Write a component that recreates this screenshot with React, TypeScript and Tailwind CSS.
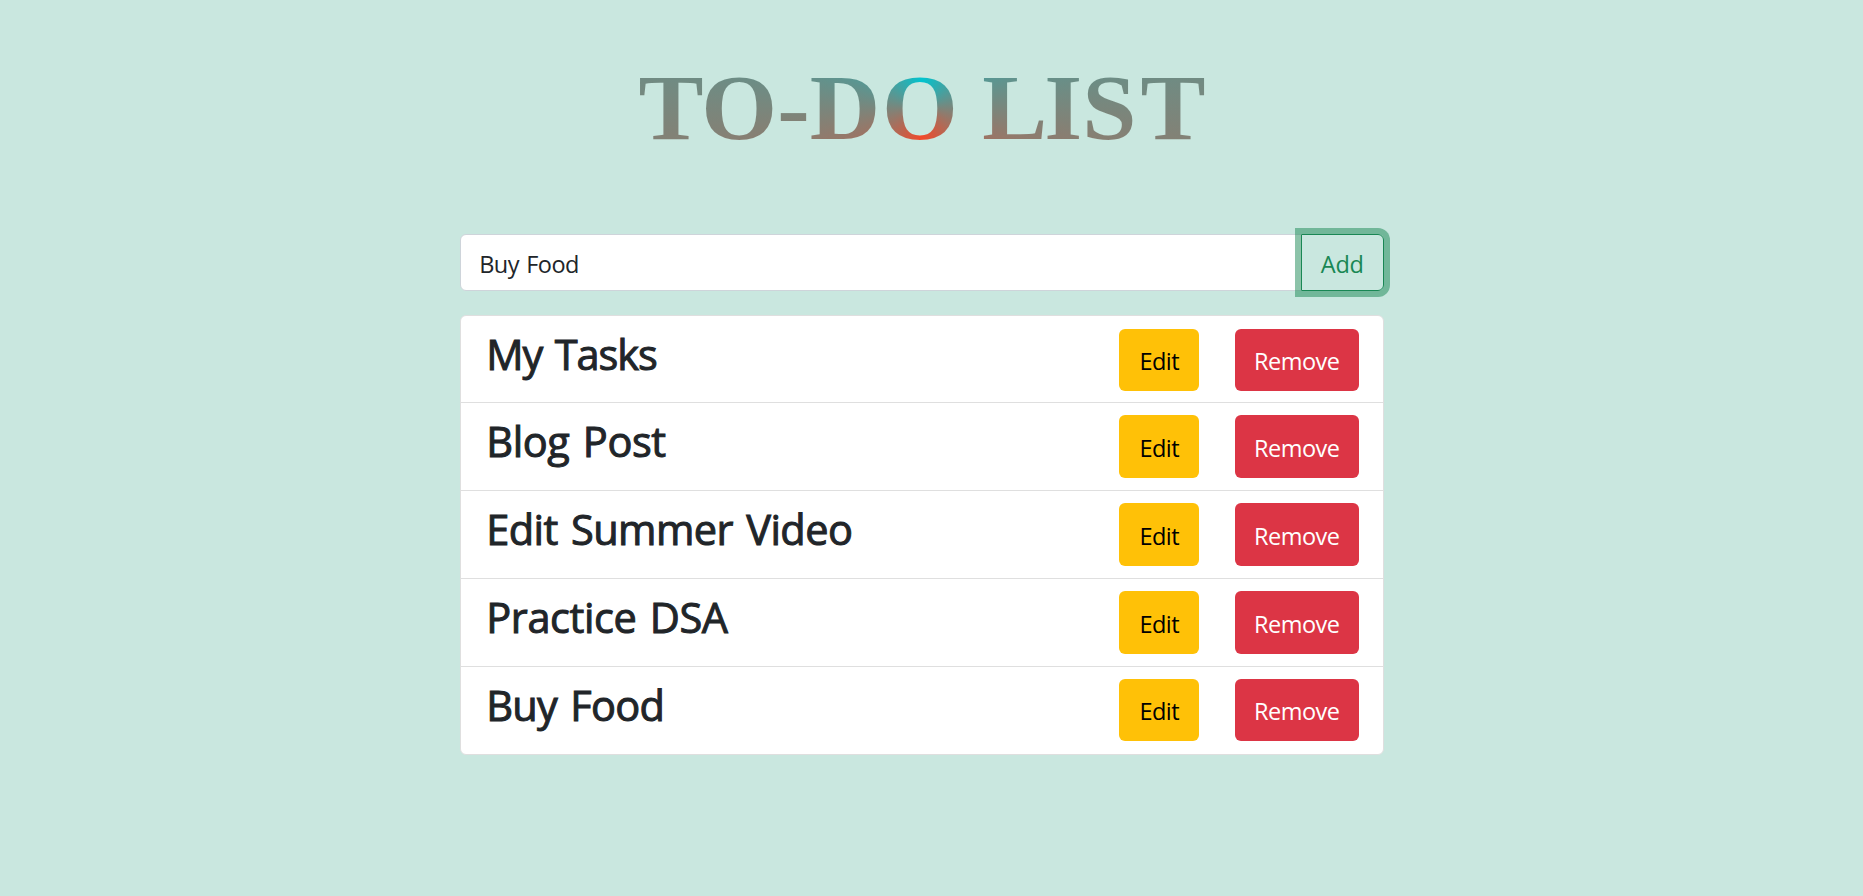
import React, { useState } from "react";

type Task = { title: string; row: string; button: string; tracking: string };

const tasks: Task[] = [
  { title: "My Tasks", row: "h-[87px] pt-[13px]", button: "h-[62px]", tracking: "-mt-px tracking-[-1.1px]" },
  { title: "Blog Post", row: "h-[88px] pt-3", button: "h-[63px]", tracking: "tracking-[-0.4px]" },
  { title: "Edit Summer Video", row: "h-[88px] pt-3", button: "h-[63px]", tracking: "tracking-[-0.55px]" },
  { title: "Practice DSA", row: "h-[88px] pt-3", button: "h-[63px]", tracking: "tracking-[-0.4px]" },
  { title: "Buy Food", row: "h-[87px] pt-3", button: "h-[62px]", tracking: "tracking-[-0.7px]" },
];

function TaskRow({ task }: { task: Task }) {
  return (
    <li className={`flex items-start border-b border-[#dfdfdf] pl-[25px] pr-[23.5px] last:border-b-0 ${task.row}`}>
      <h2
        className={`flex-1 pt-px text-[41.5px] font-normal leading-[50px] [-webkit-text-stroke:1px_#212529] [word-spacing:3px] ${task.tracking}`}
      >
        {task.title}
      </h2>
      <button className={`mr-9 w-20 rounded-[6px] bg-[#ffc107] pt-1 text-black ${task.button}`}>Edit</button>
      <button className={`w-[124px] rounded-[6px] bg-[#dc3545] pt-1 pr-px text-white ${task.button}`}>Remove</button>
    </li>
  );
}

export default function App() {
  const [text, setText] = useState("Buy Food");
  return (
    <main className="flex h-[896px] flex-col items-center overflow-hidden bg-[#c9e7df] pr-[19px] font-['Open_Sans','Noto_Sans',sans-serif] text-[23.5px] tracking-[-0.5px] text-[#212529]">
      <h1 className="mt-[49px] h-[117px] w-[922px] scale-x-[1.037] whitespace-nowrap bg-[conic-gradient(#00c4cf,#f2492a,#00c4cf)] bg-clip-text text-center font-['Liberation_Serif',serif] text-[94px] font-bold leading-[117px] tracking-normal text-transparent">
        <span className="tracking-[-2px]">T</span>O-<span className="tracking-[2px]">D</span>O{" "}
        <span className="tracking-[-3px]">L</span>I<span className="tracking-[4px]">S</span>T
      </h1>
      <div className="mt-[68px] flex h-[57px] w-[923.5px]">
        <input
          className="min-w-0 flex-1 rounded-l-[6px] border border-[#ced4da] bg-white px-[18px] pt-1 tracking-[-0.6px] outline-none [word-spacing:2px]"
          value={text}
          onChange={(e) => setText(e.target.value)}
        />
        <button className="-ml-px w-[83px] rounded-r-[6px] border border-[#198754] pt-1 tracking-[-0.2px] text-[#198754] shadow-[0_0_0_6px_rgba(25,135,84,0.5)]">
          Add
        </button>
      </div>
      <ul className="mt-6 w-[923.5px] rounded-[6px] border border-[#dfdfdf] bg-white">
        {tasks.map((task) => (
          <TaskRow key={task.title} task={task} />
        ))}
      </ul>
    </main>
  );
}
